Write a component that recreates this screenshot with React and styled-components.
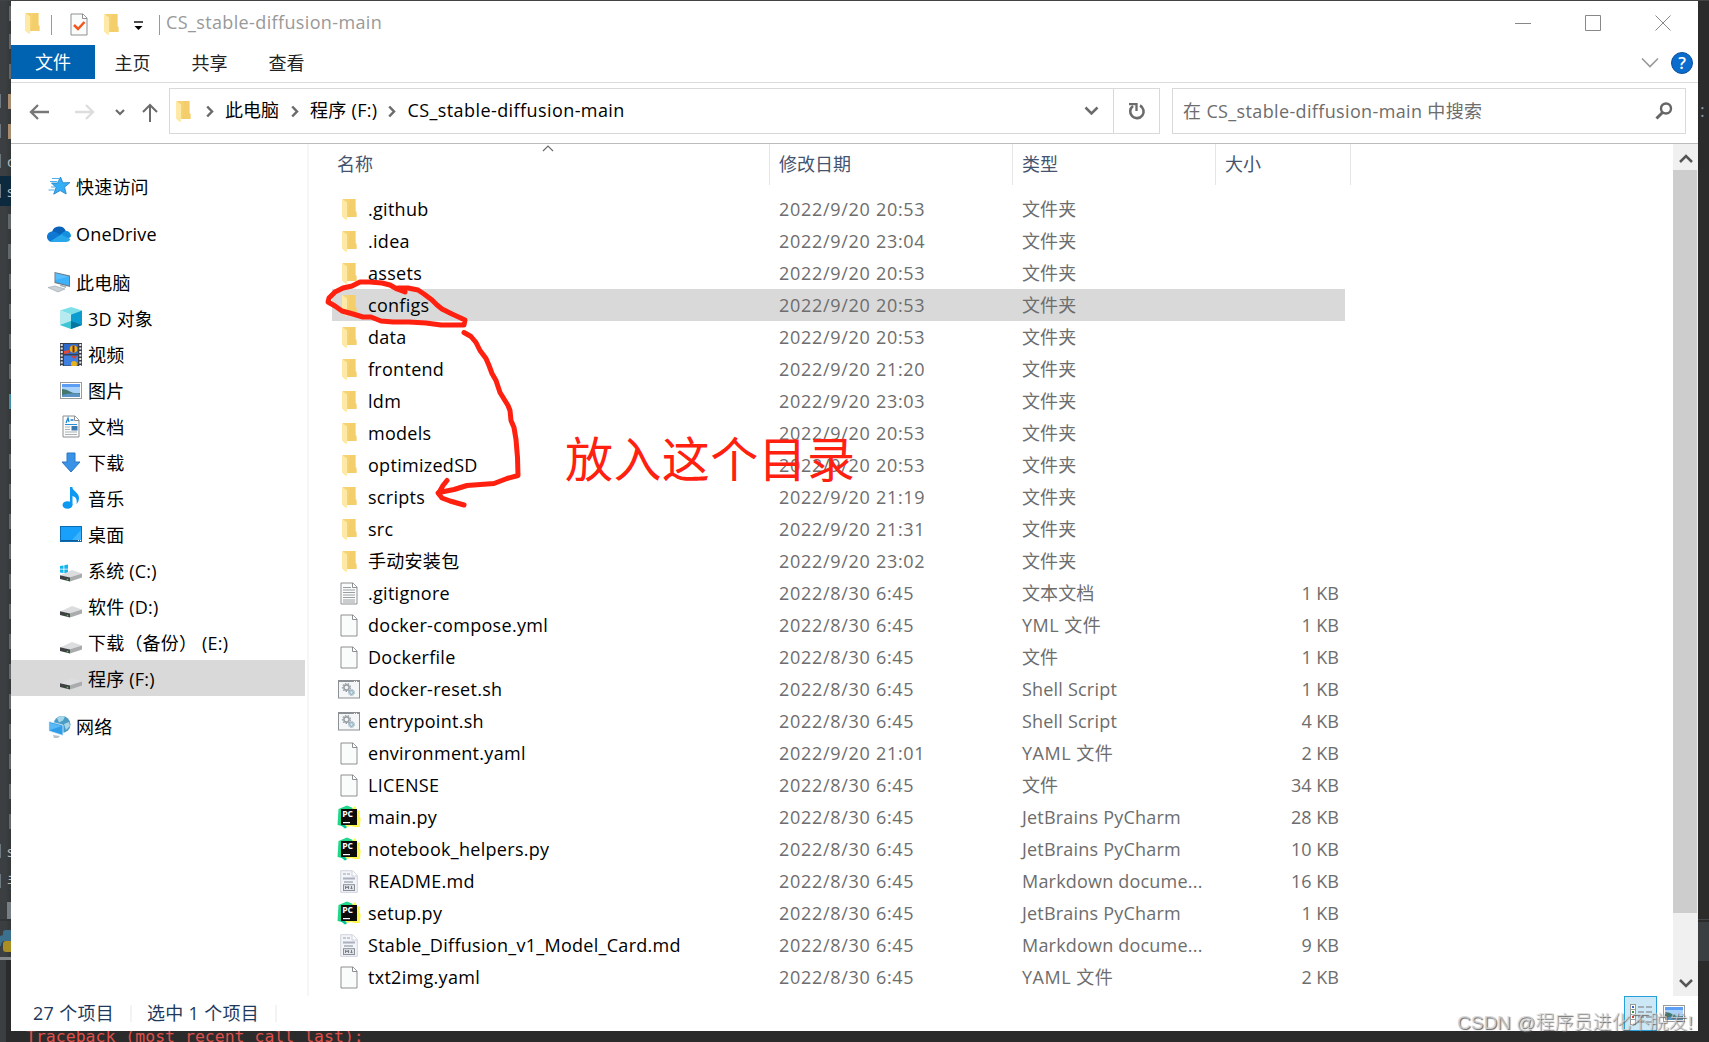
import React from "react";
import styled, { createGlobalStyle, css } from "styled-components";

const Global = createGlobalStyle`
  * { box-sizing: border-box; }
  html, body { margin: 0; padding: 0; overflow: hidden; background: #2b2b2b; }
  body { font-family: "Open Sans", "Noto Sans CJK SC", sans-serif; font-size: 18px; color: #000; }
  svg { display: block; flex: none; }
`;

const Desktop = styled.div`
  position: relative;
  width: 1709px;
  height: 1042px;
  overflow: hidden;
  display: grid;
  grid-template-columns: 11px 1687px 11px;
  grid-template-rows: 1px 1030px 11px;
  background: #2b2b2b;
`;
const TopEdge = styled.div`grid-column: 1 / 4; background: #414345;`;
const LeftEdge = styled.div`
  grid-row: 2 / 4;
  background: linear-gradient(90deg, #3c3f41 0 5px, #343738 11px);
  overflow: hidden;
  display: flex;
  flex-direction: column;
  > :first-child { height: 25px; }
`;
const EdgeRow = styled.div`
  height: 30px;
  flex: none;
  display: flex;
  align-items: center;
  justify-content: space-between;
  font-size: 15px;
  line-height: 1;
  color: #bbb;
  overflow: hidden;
  background: ${(p) => (p.$active ? "#0d293e" : "transparent")};
  &::before { content: ""; width: 1px; height: 14px; background: ${(p) => (p.$tick ? "#6e7a80" : "transparent")}; }
`;
const Tick = styled.i`width: ${(p) => p.$w || 2}px; height: 15px; background: ${(p) => p.$c || "#62686c"};`;
const EdgeLetter = styled.span`width: 4px; overflow: hidden; white-space: nowrap;`;
const RightEdge = styled.div`
  background: #2b2b2b;
  display: flex;
  flex-direction: column;
  font-size: 18px;
  line-height: 24px;
  color: #7f97a8;
`;
const RightTop = styled.div`height: 919px; border-bottom: 1px solid #45484a; padding: 97px 0 0 2px;`;
const RightTool = styled.div`height: 39px; margin-top: 2px; background: #3c3f41;`;
const Terminal = styled.div`
  grid-column: 2 / 4;
  overflow: hidden;
  padding-left: 15px;
  font: 16.5px/20px "DejaVu Sans Mono", monospace;
  color: #e0504c;
  white-space: pre;
  > span { display: block; margin-top: -4px; }
`;

const Win = styled.main`
  background: #fff;
  display: flex;
  flex-direction: column;
  grid-column: 2;
  overflow: hidden;
`;
const TitleBar = styled.header`
  height: 44px;
  flex: none;
  display: flex;
  align-items: center;
  padding-left: 13px;
  color: #999;
`;
const Title = styled.span`font-size: 18px; letter-spacing: ${(p) => p.$ls || 0}px; line-height: 24px; margin-left: 6px; margin-top: -2px;`;
const Divider = styled.i`width: 1px; height: 20px; background: #999; margin-top: 3px;`;
const Spacer = styled.span`flex: ${(p) => (p.$w ? "none" : 1)}; width: ${(p) => p.$w || 0}px;`;
const CaptionButtons = styled.div`margin-left: auto; display: flex; align-items: center; gap: 54px; padding-right: 27px;`;

const Tabs = styled.nav`
  height: 38px;
  flex: none;
  display: flex;
  border-bottom: 1px solid #dadbdc;
`;
const Tab = styled.span`
  width: ${(p) => (p.$file ? 84 : 77)}px;
  height: 34px;
  line-height: ${(p) => (p.$file ? 34 : 36)}px;
  text-align: center;
  text-indent: ${(p) => (p.$file ? 0 : -2)}px;
  color: ${(p) => (p.$file ? "#fff" : "#222")};
  background: ${(p) => (p.$file ? "#0063b1" : "transparent")};
`;
const TabEnd = styled.div`margin-left: auto; display: flex; align-items: center; gap: 12px; padding: 0 5px 2px 0;`;
const Help = styled.span`
  width: 22px; height: 22px; border-radius: 50%;
  background: #0a6ccc; border: 1px solid #0a4f9c; color: #fff;
  font-size: 17px; font-weight: 600; line-height: 20px; text-align: center;
`;

const AddressRow = styled.div`
  height: 61px;
  flex: none;
  display: flex;
  padding: 5px 12px 9px 0;
  border-bottom: 1px solid #bcbcbc;
`;
const NavButtons = styled.div`width: 158px; display: flex; align-items: center; padding-left: 18px; padding-top: 2px;`;
const AddressBox = styled.div`
  width: 991px;
  border: 1px solid #d9d9d9;
  display: flex;
  align-items: center;
  padding-left: 5px;
`;
const Crumb = styled.span`line-height: 24px; white-space: pre; margin-left: ${(p) => p.$ml}px; margin-right: ${(p) => p.$mr || 0}px; margin-top: -2px; letter-spacing: ${(p) => p.$ls || 0}px;`;
const Refresh = styled.div`width: 46px; align-self: stretch; border-left: 1px solid #d9d9d9; display: flex; align-items: center; justify-content: center; margin-left: 14px;`;
const SearchBox = styled.div`
  flex: 1;
  margin-left: 12px;
  border: 1px solid #d9d9d9;
  display: flex;
  align-items: center;
  justify-content: space-between;
  padding: 0 12px 0 10px;
  color: #6d6d6d;
  > span { margin-top: -2px; letter-spacing: 0.36px; }
`;

const Body = styled.div`height: 852px; flex: none; display: flex;`;
const Sidebar = styled.aside`width: 298px; border-right: 2px solid #f6f6f6; padding-top: 24px;`;
const SideItem = styled.div`
  height: 36px;
  width: 294px;
  margin-bottom: ${(p) => (p.$gap ? 12 : 0)}px;
  padding-left: ${(p) => (p.$root ? 36 : 49)}px;
  display: flex;
  align-items: center;
  gap: ${(p) => (p.$root ? 5 : 6)}px;
  white-space: pre;
  background: ${(p) => (p.$active ? "#d9d9d9" : "transparent")};
  > span:last-child { margin-top: -1px; letter-spacing: 0.2px; }
`;
const SideIcon = styled.span`
  width: ${(p) => (p.$root ? 24 : 22)}px;
  flex: none;
  display: flex;
  justify-content: center;
  padding-top: ${(p) => (p.$low ? 5 : 0)}px;
`;
const List = styled.section`flex: 1;`;
const grid = css`display: grid; grid-template-columns: ${(p) => p.$first}px 243px 203px ${(p) => p.$last}px;`;
const HeadRow = styled.div`
  ${grid}
  height: 41px;
  position: relative;
  color: #44546f;
`;
const HeadCell = styled.div`
  border-right: 1px solid #e5e5e5;
  line-height: 40px;
  padding-left: ${(p) => p.$pl || 9}px;
`;
const SortMark = styled.span`position: absolute; left: 233px; top: 1px;`;
const Rows = styled.div`padding: 8px 0 0 23px;`;
const Row = styled.div`
  ${grid}
  height: 32px;
  width: 1013px;
  align-items: center;
  color: #6d6d6d;
  background: ${(p) => (p.$active ? "#d9d9d9" : "transparent")};
`;
const Name = styled.div`display: flex; align-items: center; color: #000;`;
const IconCell = styled.span`width: 24px; margin: 0 7px 0 5px; display: flex; justify-content: center;`;
const NameText = styled.span`margin-top: -1px; line-height: 24px; letter-spacing: ${(p) => p.$ls}px; white-space: nowrap;`;
const Cell = styled.span`padding-left: 9px; margin-top: -1px; line-height: 24px; white-space: nowrap; letter-spacing: ${(p) => p.$ls || 0}px; text-align: ${(p) => (p.$right ? "right" : "left")}; padding-right: 6px;`;

const ScrollBar = styled.div`
  width: 25px;
  background: #f0f0f0;
  display: flex;
  flex-direction: column;
  align-items: center;
  justify-content: space-between;
  padding: 10px 0 8px;
`;
const Thumb = styled.div`align-self: stretch; margin: -1px 1px 0 0; height: 743px; background: #cdcdcd;`;
const Track = styled.div`align-self: stretch; flex: 1; padding-top: 8px;`;

const StatusBar = styled.footer`
  flex: 1;
  display: flex;
  align-items: flex-start;
  padding-left: 22px;
  color: #1e395b;
`;
const StatusText = styled.span`line-height: 24px; padding-top: 5px; letter-spacing: 0.3px; white-space: nowrap; width: ${(p) => p.$w}px;`;
const StatusSep = styled.i`width: 2px; height: 17px; background: #f3f3f3; margin-top: 9px; margin-right: 15px;`;
const ViewToggles = styled.div`margin-left: auto; display: flex; height: 35px;`;
const Toggle = styled.span`
  width: ${(p) => (p.$on ? 33 : 41)}px;
  background: ${(p) => (p.$on ? "#cce8f6" : "transparent")};
  border: 1px solid ${(p) => (p.$on ? "#26a0da" : "transparent")};
  display: flex;
  justify-content: ${(p) => (p.$on ? "center" : "flex-start")};
  padding: ${(p) => (p.$on ? "7px 0 0" : "8px 0 0 5px")};
`;

const Markup = styled.svg`position: absolute; left: 0; top: 0; pointer-events: none;`;
const MarkText = styled.div`
  position: absolute;
  left: 565px;
  top: 427px;
  font-size: 48px;
  letter-spacing: 0.4px;
  line-height: 64px;
  color: #ff2010;
  white-space: nowrap;
`;
const Watermark = styled.div`
  position: absolute;
  left: 1457px;
  top: 1010px;
  font-size: 19px;
  line-height: 26px;
  font-family: "Liberation Sans", "Noto Sans CJK SC", sans-serif;
  font-weight: 300;
  color: #d4d4d4cc;
  text-shadow: 1px 1px 1px #666;
  white-space: nowrap;
`;

const Folder = () => (
  <svg width="16" height="23" viewBox="0 0 16 23">
    <path d="M2 1h12.5v12l1 1v5H2z" fill="#f5d374" />
    <path d="M9 1h5.5v12l1 1v5H7z" fill="#f1cb62" opacity=".55" />
    <path d="M1 1l5 3.2V22l-2.2-.8L1 18.5z" fill="#ffe9a6" />
  </svg>
);
const DocShape = ({ children, fill = "#fafbfb", stroke = "#8c8f91" }) => (
  <svg width="18" height="23" viewBox="0 0 18 23">
    <path d="M1 1h12l4 4v17H1z" fill={fill} stroke={stroke} />
    <path d="M12.5 1v4.5H17" fill="#fff" stroke={stroke} />
    {children}
  </svg>
);
const TextDoc = () => (
  <DocShape>
    <path d="M3 5.5h8M3 8h12M3 10.5h12M3 13h12M3 15.5h12M3 18h12M3 20h12" stroke="#9b9ea0" />
  </DocShape>
);
const ShellIcon = () => (
  <svg width="22" height="19" viewBox="0 0 22 19">
    <rect x=".5" y=".5" width="21" height="17.5" fill="#f5f6f7" stroke="#8b9094" />
    <path d="M0 1h22" stroke="#8b9094" strokeWidth="2" />
    <path d="M16 1.5h4" stroke="#fff" strokeDasharray="1 1" />
    <circle cx="8.5" cy="7.5" r="2.6" fill="none" stroke="#9aa2a8" strokeWidth="1.6" />
    <circle cx="8.5" cy="7.5" r="4" fill="none" stroke="#9aa2a8" strokeWidth="1.2" strokeDasharray="1.5 1.3" />
    <circle cx="13.5" cy="12.5" r="1.8" fill="#dcecf5" stroke="#8fb0c2" strokeWidth="1.3" />
    <circle cx="13.5" cy="12.5" r="3" fill="none" stroke="#8ba2b0" strokeDasharray="1.2 1.1" />
  </svg>
);
const PyCharmIcon = () => (
  <svg width="24" height="24" viewBox="0 0 24 24">
    <path d="M1.5 4L10 .5 16 3l-6 13 1 5-3 2.5L5 21 .5 20z" fill="#21d789" />
    <path d="M15 4l3-3 2 4 3 1-.5 5 1.2 3-1 8H17l-3-1-6 1.5L7 20l9-6z" fill="#fcf84a" />
    <path d="M2 19l6 1 2 2-2 1.5L5 21z" fill="#07c3a0" />
    <rect x="4" y="4" width="16" height="16" fill="#0c0c0c" />
    <rect x="6" y="17" width="7" height="1.2" fill="#fff" />
    <text x="5.2" y="12.4" fontSize="8.6" fontWeight="700" fill="#fff" fontFamily="Open Sans, sans-serif">PC</text>
  </svg>
);
const MdIcon = () => (
  <svg width="18" height="23" viewBox="0 0 18 23">
    <path d="M.7.7h11.8l4.8 4.8v16.8H.7z" fill="#f3f4f9" stroke="#cfd2de" />
    <path d="M12 1v5h5" fill="#fff" stroke="#cfd2de" />
    <path d="M3 4h8" stroke="#9a9fac" strokeDasharray="3 1" />
    <path d="M3 8.5h12" stroke="#aab0bc" strokeWidth="2" />
    <path d="M4 12h9" stroke="#b9bfc9" strokeWidth="2" />
    <rect x="3.5" y="14.7" width="11" height="5.8" fill="#e4e6ea" stroke="#8b8f98" />
    <path d="M5.5 19v-3l1.5 2 1.5-2v3M11.5 16v3M10.3 17.8l1.2 1.2 1.2-1.2" fill="none" stroke="#777c86" />
  </svg>
);
const Photo = () => (
  <svg width="22" height="17" viewBox="0 0 22 17">
    <rect x=".5" y=".5" width="21" height="16" fill="#fff" stroke="#9b9b9b" />
    <rect x="2" y="2" width="18" height="13" fill="#a9d2fb" />
    <path d="M2 2h18v3H2z" fill="#5c9df5" />
    <path d="M2 7q5 0 8 2.500t10 1.500v4H2z" fill="#43766c" />
    <path d="M2 13q9-3 18-1v3H2z" fill="#5b93c4" />
  </svg>
);
const Drive = ({ win }) => (
  <svg width="22" height="20" viewBox="0 0 22 20">
    {win && <path d="M0 3l3.500-.6v3.400H0zM4.300 2.300L8 1.600v4.200H4.300zM0 6.600h3.500V10L0 9.400zM4.300 6.600H8v4l-3.700-.5z" fill="#14b5ee" />}
    <path d="M0 12.500L12 7l10 3.500-12 4z" fill="#dcdddf" />
    <path d="M10 14.200L22 10.500v4L10 18.500z" fill="#a9abad" />
    <path d="M0 12.300l10 2.200v4L0 16z" fill="#3f4244" />
    <path d="M7.500 15.800v1.500" stroke="#3bd23b" strokeWidth="1.500" />
  </svg>
);

const sideIcons = {
  star: (
    <svg width="24" height="22" viewBox="0 0 24 22">
      <path d="M13.5 2l2.400 5.800 7-.2-5.300 4.600 1.600 6.800-6-3.400-6.500 3.600L9 12.500 4.500 8l6 .1z" fill="#36aef5" stroke="#1e7fc4" strokeWidth=".8" />
      <path d="M5 3.500h7M3 6.500h7M4 12h4M1.500 15h6" stroke="#4aaee8" />
    </svg>
  ),
  cloud: (
    <svg width="24" height="17" viewBox="0 0 24 17">
      <path d="M5 6a7.300 7.300 0 0 1 13.800-1L12 12z" fill="#0a62b9" />
      <path d="M5.500 5.500C2 5.500 0 8 0 10.800 0 13.500 2 16 5 16l9-5-3-3.800q-2.500-1.700-5.500-1.700z" fill="#0f78d4" />
      <path d="M13 8.500l5.500-3.700C22 5 24 7.500 24 10.500q-3 3-6 2z" fill="#1490df" />
      <path d="M3 15.500L14 8.500l9.400 4.500q-1.200 3-4.400 3H5.500q-1.500 0-2.500-.5z" fill="#28a8ea" />
    </svg>
  ),
  pc: (
    <svg width="24" height="22" viewBox="0 0 24 22">
      <path d="M7.500 1L23 4.500v11.500L7.500 12z" fill="#6d7b85" />
      <path d="M8.500 2.300L22 5.500v9L8.500 11z" fill="#3db1fa" />
      <path d="M8.500 2.300L22 5.500 8.500 9z" fill="#6cc6ff" opacity=".6" />
      <path d="M1 16.500l7-1.500 10 3-7 3z" fill="#c9d0d6" stroke="#98a2aa" strokeWidth=".6" />
      <path d="M13 13.500l6 1.500v2l-6-2z" fill="#aab3ba" />
    </svg>
  ),
  cube: (
    <svg width="22" height="22" viewBox="0 0 22 22">
      <path d="M0 3.500L11 0l11 3.500-11 4z" fill="#7ddfe8" />
      <path d="M0 3.500l11 4V22L0 18z" fill="#b5eaf0" />
      <path d="M22 3.500l-11 4V22l11-4z" fill="#0b9dcf" />
      <path d="M0 18l11-4v8z" fill="#3dc5d6" />
      <path d="M11 14l11 4-11 4z" fill="#06759f" />
    </svg>
  ),
  film: (
    <svg width="22" height="23" viewBox="0 0 22 23">
      <rect width="22" height="23" fill="#38404d" />
      <path d="M1.700 1v22M20.300 1v22" stroke="#e6e6e6" strokeWidth="2" strokeDasharray="2 1.500" />
      <rect x="4" y="1" width="14" height="10" fill="#2f69c9" />
      <rect x="4" y="12.500" width="14" height="10" fill="#3f7fe0" />
      <circle cx="13.500" cy="6" r="3.800" fill="#e7b11a" />
      <path d="M12.500 2.500h2v7h-2z" fill="#7b2c22" />
      <path d="M4 8l5-1v3l-5 1z" fill="#e14a3b" />
      <path d="M11 13h6l-3 3z" fill="#d8422e" />
      <circle cx="14" cy="21" r="3" fill="#e7b11a" />
    </svg>
  ),
  photo: <Photo />,
  doc: (
    <DocShape>
      <path d="M4 8l2-5 1 4M8.500 5h3" stroke="#1d86d0" strokeWidth="1.300" fill="none" />
      <path d="M3 9.500h12" stroke="#2a8fd6" />
      <path d="M3 12h5M3 14.500h5M3 17h12M3 19.500h12" stroke="#aeb2b5" />
      <rect x="9.500" y="11" width="6" height="4.500" fill="#3c78b0" />
    </DocShape>
  ),
  down: (
    <svg width="20" height="21" viewBox="0 0 20 21">
      <path d="M6 1h8v9h5l-9 10L1 10h5z" fill="#3a92e6" stroke="#2b77c4" />
    </svg>
  ),
  note: (
    <svg width="18" height="24" viewBox="0 0 18 24">
      <ellipse cx="5.500" cy="19" rx="5" ry="3.800" fill="#0d99f2" />
      <path d="M8 1h2.300c.3 4 6.700 5.500 6.700 11 0 2.500-1 4.500-2.500 6 .8-4.500-.5-7-4-8v9H8z" fill="#0d99f2" />
    </svg>
  ),
  desktop: (
    <svg width="22" height="16" viewBox="0 0 22 16">
      <rect x=".5" y=".5" width="21" height="15" fill="#18a0fb" stroke="#0c6cb4" />
      <path d="M12 14L21 4v10z" fill="#3db4ff" />
      <path d="M1 14.500h20" stroke="#0b5c9c" />
      <path d="M18 14.500h3" stroke="#fff" strokeDasharray="1 1" />
    </svg>
  ),
  net: (
    <svg width="23" height="23" viewBox="0 0 23 23">
      <circle cx="14" cy="9.500" r="8.500" fill="#4b9cc4" />
      <path d="M9 3q4-3 8-1.500l-2 4-4 2zM16 9l5-2 1 4-4 4z" fill="#a5d6ea" />
      <path d="M1 6.500l14 3.500v10.500L1 16z" fill="#2f9de8" stroke="#e3f1fa" strokeWidth=".8" />
      <path d="M2 8l12 3-12 4z" fill="#6cc3fa" opacity=".7" />
      <path d="M5 20l7 1-2 2H6z" fill="#b9c0c6" />
    </svg>
  ),
  win: <Drive win />,
  drive: <Drive />,
};

const fileIcons = { folder: <Folder />, text: <TextDoc />, blank: <DocShape />, sh: <ShellIcon />, py: <PyCharmIcon />, md: <MdIcon /> };

const side = [
  ["star", "快速访问", "root gap"],
  ["cloud", "OneDrive", "root gap"],
  ["pc", "此电脑", "root"],
  ["cube", "3D 对象"],
  ["film", "视频"],
  ["photo", "图片"],
  ["doc", "文档"],
  ["down", "下载"],
  ["note", "音乐"],
  ["desktop", "桌面"],
  ["win", "系统 (C:)"],
  ["drive", "软件 (D:)"],
  ["drive", "下载（备份） (E:)"],
  ["drive", "程序 (F:)", "active gap"],
  ["net", "网络", "root"],
];

const A = "2022/8/30 6:45";
const files = [
  ["folder", ".github", "2022/9/20 20:53", "文件夹", ""],
  ["folder", ".idea", "2022/9/20 23:04", "文件夹", ""],
  ["folder", "assets", "2022/9/20 20:53", "文件夹", ""],
  ["folder", "configs", "2022/9/20 20:53", "文件夹", ""],
  ["folder", "data", "2022/9/20 20:53", "文件夹", ""],
  ["folder", "frontend", "2022/9/20 21:20", "文件夹", ""],
  ["folder", "ldm", "2022/9/20 23:03", "文件夹", ""],
  ["folder", "models", "2022/9/20 20:53", "文件夹", ""],
  ["folder", "optimizedSD", "2022/9/20 20:53", "文件夹", ""],
  ["folder", "scripts", "2022/9/20 21:19", "文件夹", ""],
  ["folder", "src", "2022/9/20 21:31", "文件夹", ""],
  ["folder", "手动安装包", "2022/9/20 23:02", "文件夹", ""],
  ["text", ".gitignore", A, "文本文档", "1 KB"],
  ["blank", "docker-compose.yml", A, "YML 文件", "1 KB"],
  ["blank", "Dockerfile", A, "文件", "1 KB"],
  ["sh", "docker-reset.sh", A, "Shell Script", "1 KB"],
  ["sh", "entrypoint.sh", A, "Shell Script", "4 KB"],
  ["blank", "environment.yaml", "2022/9/20 21:01", "YAML 文件", "2 KB"],
  ["blank", "LICENSE", A, "文件", "34 KB"],
  ["py", "main.py", A, "JetBrains PyCharm", "28 KB"],
  ["py", "notebook_helpers.py", A, "JetBrains PyCharm", "10 KB"],
  ["md", "README.md", A, "Markdown docume...", "16 KB"],
  ["py", "setup.py", A, "JetBrains PyCharm", "1 KB"],
  ["md", "Stable_Diffusion_v1_Model_Card.md", A, "Markdown docume...", "9 KB"],
  ["blank", "txt2img.yaml", A, "YAML 文件", "2 KB"],
];

const Chevron = ({ w = 12, h = 8, d, color = "#6b6b6b", s = 2.5 }) => (
  <svg width={w} height={h} viewBox={`0 0 ${w} ${h}`}>
    <path d={d} fill="none" stroke={color} strokeWidth={s} />
  </svg>
);
const CrumbArrow = () => <Chevron w={8} h={13} d="M1.200 1.500l4.800 5-4.800 5" />;

const edgeRows = Array.from({ length: 29 }, (_, i) => i);
const letters = { 5: "c", 6: "s", 28: "s" };
const tickColors = { 3: "#a98d72", 4: "#a98d72", 13: "#3e8ca8" };
const typeSpacing = (t) => (/[一-龥]/.test(t) ? (/[A-Z]/.test(t) ? 0.5 : 0.1) : 0.2);

const TitleDoc = styled.span`margin-top: 3px;`;
const QuickArrow = styled.span`margin-top: 6px;`;

export default function App() {
  return (
    <>
      <Global />
      <Desktop>
        <TopEdge />
        <LeftEdge>
          {edgeRows.map((i) => (
            <EdgeRow key={i} $active={i === 6} $tick={(i >= 3 && i <= 6) || i === 28}>
              {letters[i] ? <EdgeLetter>{letters[i]}</EdgeLetter> : <Tick $w={[3, 4, 7, 8].includes(i) ? 3 : 2} $c={tickColors[i]} />}
            </EdgeRow>
          ))}
          <EdgeRow $tick><EdgeLetter>手</EdgeLetter></EdgeRow>
          <svg width="11" height="146" viewBox="0 -4 11 146">
            <path d="M7 2h4v17H7z" fill="#777e84" />
            <path d="M0 20h11" stroke="#292b2d" />
            <path d="M3 35V32q0-2 3-2h5v11H5q-4 0-4 5H0V36z" fill="#3b718f" />
            <path d="M11 41H6q-3 0-3 3v5q0 3 3 3h5z" fill="#a98d25" />
            <path d="M0 58.500h11" stroke="#85888a" strokeWidth="3" />
            <path d="M6 60h5v82H6z" fill="#292b2c" />
          </svg>
        </LeftEdge>
        <Win>
          <TitleBar>
            <Folder />
            <Spacer $w={11} />
            <Divider />
            <Spacer $w={18} />
            <TitleDoc>
              <DocShape><path d="M4 12l4 4 6.500-7" fill="none" stroke="#f2561d" strokeWidth="2.500" /></DocShape>
            </TitleDoc>
            <Spacer $w={15} />
            <TitleDoc><Folder /></TitleDoc>
            <Spacer $w={14} />
            <QuickArrow>
              <svg width="11" height="10" viewBox="0 0 11 10">
                <path d="M1 1h9" stroke="#000" strokeWidth="1.400" />
                <path d="M1.500 5h8l-4 4z" fill="#000" />
              </svg>
            </QuickArrow>
            <Spacer $w={15} />
            <Divider />
            <Title $ls={0.37}>CS_stable-diffusion-main</Title>
            <CaptionButtons>
              <Chevron w={16} h={16} d="M0 8.500h16" s={1} color="#888" />
              <Chevron w={16} h={16} d="M.5.5h15v15H.5z" s={1} color="#888" />
              <Chevron w={16} h={16} d="M.5.5l15 15M15.500.5l-15 15" s={1} color="#888" />
            </CaptionButtons>
          </TitleBar>
          <Tabs>
            <Tab $file>文件</Tab>
            <Tab>主页</Tab>
            <Tab>共享</Tab>
            <Tab>查看</Tab>
            <TabEnd>
              <Chevron w={18} h={11} d="M1 1.500l8 8 8-8" s={1.6} color="#999" />
              <Help>?</Help>
            </TabEnd>
          </Tabs>
          <AddressRow>
            <NavButtons>
              <Chevron w={20} h={16} d="M20 8H2M9 1L2 8l7 7" s={2.3} color="#777" />
              <Spacer $w={26} />
              <Chevron w={20} h={16} d="M0 8h18M11 1l7 7-7 7" s={2.3} color="#ddd" />
              <Spacer $w={20} />
              <Chevron w={10} h={7} d="M1 1l4 4 4-4" s={2.2} />
              <Spacer $w={17} />
              <Chevron w={16} h={19} d="M8 19V2M1 9l7-7 7 7" s={2} />
            </NavButtons>
            <AddressBox>
              <Folder />
              <Spacer $w={15} />
              <CrumbArrow />
              <Crumb $ml={11} $mr={12}>此电脑</Crumb>
              <CrumbArrow />
              <Crumb $ml={11} $mr={11} $ls={0.3}>程序 (F:)</Crumb>
              <CrumbArrow />
              <Crumb $ml={11} $ls={0.42}>CS_stable-diffusion-main</Crumb>
              <Spacer />
              <Chevron w={15} h={10} d="M1.500 1.500l6 6 6-6" s={2.5} />
              <Refresh>
                <svg width="18" height="19" viewBox="0 0 18 19">
                  <path d="M12 3.500A6.700 6.700 0 1 1 5 4" fill="none" stroke="#6b6b6b" strokeWidth="2.600" />
                  <path d="M1 2.200h7.500V9" fill="none" stroke="#6b6b6b" strokeWidth="2.300" />
                </svg>
              </Refresh>
            </AddressBox>
            <SearchBox>
              <span>在 CS_stable-diffusion-main 中搜索</span>
              <svg width="18" height="18" viewBox="0 0 18 18">
                <circle cx="11" cy="6.500" r="5" fill="none" stroke="#666" strokeWidth="2.400" />
                <path d="M7.500 10.500L1.500 16.500" stroke="#666" strokeWidth="3" />
              </svg>
            </SearchBox>
          </AddressRow>
          <Body>
            <Sidebar>
              {side.map(([icon, label, f = ""]) => (
                <SideItem key={label} $root={f.includes("root")} $gap={f.includes("gap")} $active={f.includes("active")}>
                  <SideIcon $root={f.includes("root")} $low={icon === "drive" || icon === "win"}>{sideIcons[icon]}</SideIcon>
                  <span>{label}</span>
                </SideItem>
              ))}
            </Sidebar>
            <List>
              <HeadRow $first={461} $last={135}>
                <HeadCell $pl={28}>名称</HeadCell>
                <HeadCell>修改日期</HeadCell>
                <HeadCell>类型</HeadCell>
                <HeadCell>大小</HeadCell>
                <SortMark><Chevron w={12} h={7} d="M1 6l5-5 5 5" s={1.2} /></SortMark>
              </HeadRow>
              <Rows>
                {files.map(([icon, name, date, type, size]) => (
                  <Row key={name} $first={438} $last={129} $active={name === "configs"}>
                    <Name>
                      <IconCell>{fileIcons[icon]}</IconCell>
                      <NameText $ls={0.29}>{name}</NameText>
                    </Name>
                    <Cell $ls={0.7}>{date}</Cell>
                    <Cell $ls={typeSpacing(type)}>{type}</Cell>
                    <Cell $right>{size}</Cell>
                  </Row>
                ))}
              </Rows>
            </List>
            <ScrollBar>
              <Chevron w={14} h={9} d="M1 8l6-6 6 6" s={2.5} color="#555" />
              <Track><Thumb /></Track>
              <Chevron w={14} h={9} d="M1 1l6 6 6-6" s={2.5} color="#555" />
            </ScrollBar>
          </Body>
          <StatusBar>
            <StatusText $w={97}>27 个项目</StatusText>
            <StatusSep />
            <StatusText $w={128}>选中 1 个项目</StatusText>
            <StatusSep />
            <ViewToggles>
              <Toggle $on>
                <svg width="22" height="22" viewBox="0 0 22 22">
                  <rect x=".5" y=".5" width="5" height="20" fill="#fff" stroke="#999" />
                  <path d="M0 5.500h6M0 10.500h6M0 15.500h6" stroke="#999" />
                  <path d="M2 3h2" stroke="#3168c9" strokeWidth="2" />
                  <path d="M2 8h2" stroke="#3b8d45" strokeWidth="2" />
                  <path d="M2 13h2" stroke="#c9402f" strokeWidth="2" />
                  <path d="M8 3h6M16 3h6M8 8h6M16 8h6M8 13h6M16 13h6M8 18h6M16 18h6" stroke="#777" />
                </svg>
              </Toggle>
              <Toggle><Photo /></Toggle>
            </ViewToggles>
          </StatusBar>
        </Win>
        <RightEdge>
          <RightTop>:</RightTop>
          <RightTool />
        </RightEdge>
        <Terminal><span>Traceback (most recent call last):</span></Terminal>
        <Markup width="1709" height="1042" viewBox="0 0 1709 1042" fill="none" stroke="#ff2010" strokeWidth="5" strokeLinecap="round" strokeLinejoin="round">
          <path d="M405 292l-8-3-7-4-8-2-12-1-10 0-8 4-9 2-8 4-6 6-1 4 7 4 7 5 11 3 10 3 8 0 10 4 12 1 16 0 17 1 15 2 23 0 1-5-13-6-10-5-5-4-5-5-8-6-6-4-10-2h-10" />
          <path d="M464 332.500l7 4 5 6 4 8 6 8 3 7 3 8 4 7 4 12 8 13 2 5 1 10 3 7 2 12 1.500 18 .5 18-11 3-13 5-27 2-13 4-15 3 4-7 4-5" />
          <path d="M438 493l4 5 8 3 7 2 7 2" />
        </Markup>
        <MarkText>放入这个目录</MarkText>
        <Watermark>CSDN @程序员进化不脱发!</Watermark>
      </Desktop>
    </>
  );
}
